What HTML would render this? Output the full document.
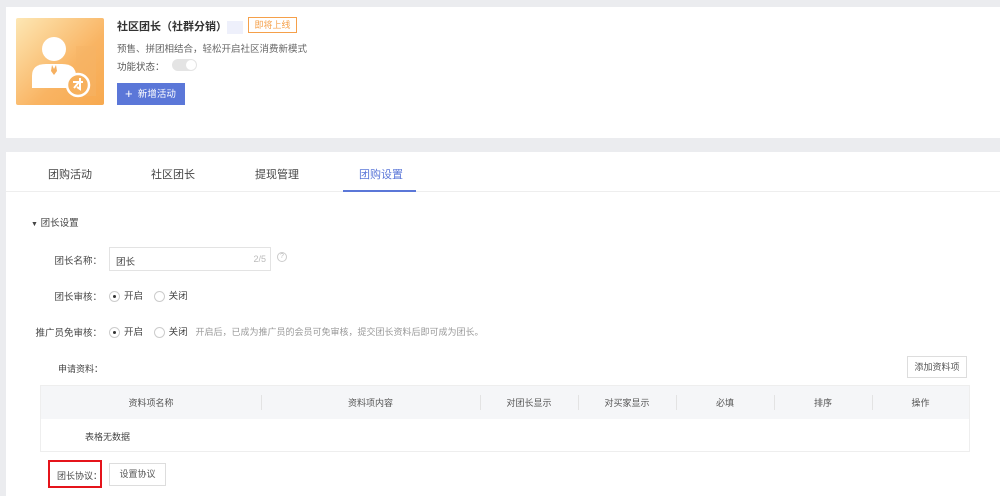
<!DOCTYPE html>
<html><head><meta charset="utf-8"><style>
*{margin:0;padding:0;box-sizing:border-box}
body{width:1000px;height:496px;background:#ebecef;font-family:"Liberation Sans","Noto Sans CJK SC",sans-serif;color:#333;position:relative;overflow:hidden;font-size:10px}
.card{position:absolute;background:#fff}
.abs{position:absolute;white-space:nowrap}
.lbl{position:absolute;right:898px;white-space:nowrap;color:#444;font-size:9.5px}
.radio{display:inline-block;width:11px;height:11px;border:1px solid #ccc;border-radius:50%;vertical-align:middle;margin-right:4px;position:relative}
.radio.on:after{content:"";position:absolute;left:3px;top:3px;width:3px;height:3px;border-radius:50%;background:#333}
.btn{position:absolute;border:1px solid #ddd;background:#fff;color:#555;text-align:center;font-size:9px}
th{font-weight:normal;color:#555;font-size:9px;position:relative}
th.s:before{content:"";position:absolute;left:0;top:9px;height:15px;border-left:1px solid #e3e3e3}
</style></head><body>
<div class="card" style="left:6px;top:7px;width:994px;height:131px">
  <div class="abs" style="left:10px;top:11px;width:88px;height:87px;background:linear-gradient(135deg,#fde7b4,#f9b463 60%,#f7a94f);border-radius:2px">
    <svg width="88" height="87" viewBox="0 0 88 87">
      <rect x="60" y="28" width="20" height="50" fill="#f6b466" opacity=".5"/>
      <circle cx="38" cy="31" r="12" fill="#fff"/>
      <path d="M16 70 V58 q0-12 14-12 h16 q14 0 14 12 V70z" fill="#fff"/>
      <path d="M36 47 l2 4 l2-4 l1 6 l-3 4 l-3-4z" fill="#f6b060"/>
      <circle cx="62" cy="67" r="11" fill="#f7b15d" stroke="#fff" stroke-width="2.5"/>
      <path d="M57 64 h10 M64 60 v11 l-3-2 M63 64 l-5 6" stroke="#fff" stroke-width="2" fill="none"/>
    </svg>
  </div>
  <div class="abs" style="left:111px;top:11px;font-size:11px;font-weight:bold;color:#333">社区团长（社群分销）<span style="display:inline-block;width:16px;height:13px;background:#eef0fb;vertical-align:middle"></span></div>
  <div class="abs" style="left:242px;top:10px;width:49px;height:16px;border:1px solid #f5a04a;color:#f5a04a;font-size:9px;text-align:center;line-height:14px">即将上线</div>
  <div class="abs" style="left:111px;top:34px;color:#666;font-size:9.5px">预售、拼团相结合，轻松开启社区消费新模式</div>
  <div class="abs" style="left:111px;top:52px;color:#555;font-size:9.5px">功能状态：</div>
  <div class="abs" style="left:166px;top:52px;width:25px;height:12px;border-radius:6px;background:#e4e4e4"><div style="position:absolute;right:1px;top:1px;width:10px;height:10px;border-radius:50%;background:#fff"></div></div>
  <div class="abs" style="left:111px;top:76px;width:68px;height:22px;background:#5b77d8;color:#fff;font-size:9.5px;line-height:22px;padding-left:8px"><span style="font-size:13px;vertical-align:-1px">+</span>&nbsp;&nbsp;新增活动</div>
</div>
<div class="card" style="left:6px;top:152px;width:994px;height:344px">
  <div class="abs" style="left:0;top:39px;width:994px;height:1px;background:#eee"></div>
  <div class="abs" style="left:42px;top:14px;font-size:11px;color:#444">团购活动</div>
  <div class="abs" style="left:145px;top:14px;font-size:11px;color:#444">社区团长</div>
  <div class="abs" style="left:249px;top:14px;font-size:11px;color:#444">提现管理</div>
  <div class="abs" style="left:353px;top:14px;font-size:11px;color:#5b77d8">团购设置</div>
  <div class="abs" style="left:337px;top:38px;width:73px;height:2px;background:#5b77d8"></div>
  <div class="abs" style="left:25px;top:63px;font-size:9.5px;color:#444"><span style="font-size:7px">▼</span> 团长设置</div>
  <div class="lbl" style="top:101px">团长名称：</div>
  <div class="abs" style="left:103px;top:95px;width:162px;height:24px;border:1px solid #e3e3e3;padding:6px 0 0 6px;color:#444;font-size:9.5px">团长<span style="position:absolute;right:4px;top:6px;color:#bbb;font-size:9px">2/5</span></div>
  <div class="abs" style="left:271px;top:100px;width:10px;height:10px;border:1px solid #ccc;border-radius:50%;font-size:7px;color:#bbb;text-align:center;line-height:8px">?</div>
  <div class="lbl" style="top:137px">团长审核：</div>
  <div class="abs" style="left:103px;top:136px;color:#444;font-size:9.5px"><span class="radio on"></span>开启&nbsp;&nbsp;&nbsp;&nbsp;<span class="radio"></span>关闭</div>
  <div class="lbl" style="top:173px">推广员免审核：</div>
  <div class="abs" style="left:103px;top:172px;color:#444;font-size:9.5px"><span class="radio on"></span>开启&nbsp;&nbsp;&nbsp;&nbsp;<span class="radio"></span>关闭&nbsp;&nbsp;&nbsp;<span style="color:#999;font-size:9px">开启后，已成为推广员的会员可免审核，提交团长资料后即可成为团长。</span></div>
  <div class="abs" style="left:52px;top:210px;color:#444;font-size:9px">申请资料：</div>
  <div class="btn" style="left:901px;top:204px;width:60px;height:22px;line-height:20px">添加资料项</div>
  <div class="abs" style="left:34px;top:233px;width:930px;height:67px;border:1px solid #eee">
    <table style="width:100%;border-collapse:collapse;height:33px;background:#f5f6f8">
      <tr><th style="width:220px">资料项名称</th><th class="s" style="width:219px">资料项内容</th><th class="s" style="width:98px">对团长显示</th><th class="s" style="width:98px">对买家显示</th><th class="s" style="width:98px">必填</th><th class="s" style="width:98px">排序</th><th class="s">操作</th></tr>
    </table>
    <div style="position:absolute;left:44px;top:44px;font-size:9px;color:#444">表格无数据</div>
  </div>
  <div class="abs" style="left:42px;top:308px;width:54px;height:28px;border:2px solid #e5141b;font-size:9px;color:#444;padding:7px 0 0 7px">团长协议：</div>
  <div class="btn" style="left:103px;top:311px;width:57px;height:23px;line-height:21px">设置协议</div>
</div>
</body></html>
